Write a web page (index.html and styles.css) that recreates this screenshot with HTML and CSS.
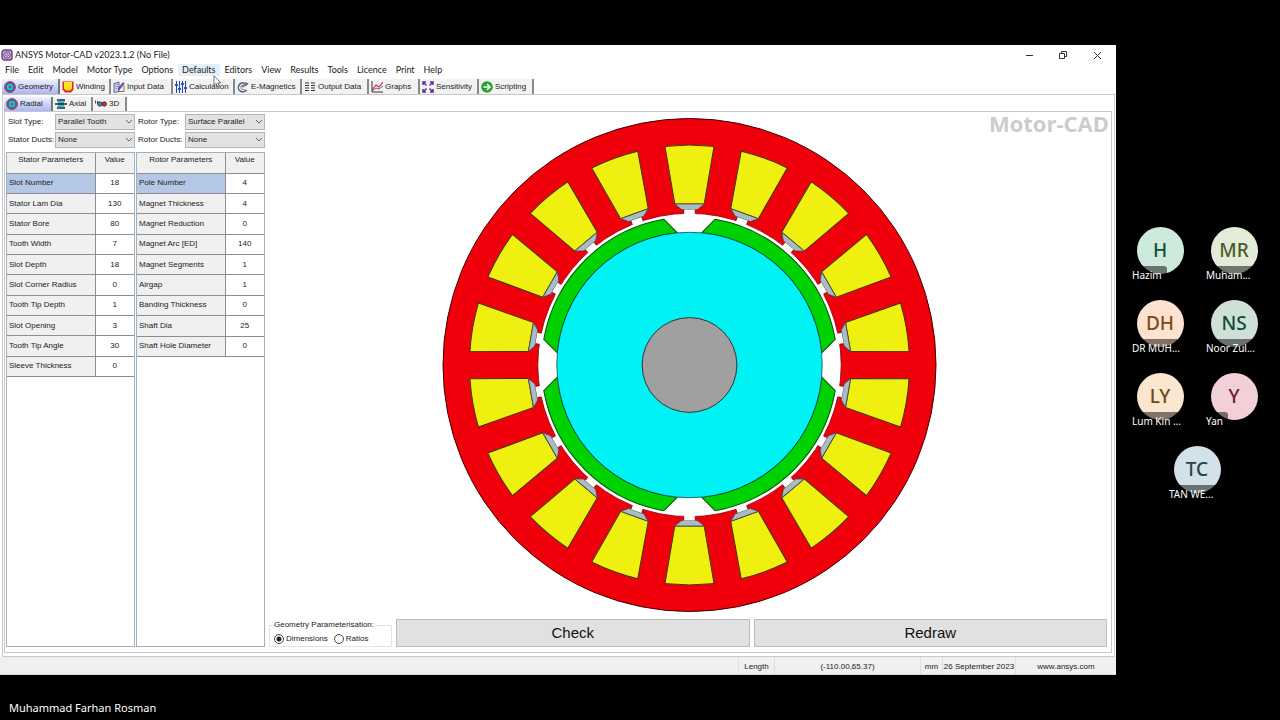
FILE: index.html
```html
<!DOCTYPE html>
<html lang="en">
<head>
<meta charset="utf-8">
<title>ANSYS Motor-CAD v2023.1.2 (No File)</title>
<link rel="stylesheet" href="styles.css">
</head>
<body>
<svg class="defs" aria-hidden="true">
  <defs>
    <symbol id="rotor" viewBox="0 0 12 12"><circle cx="6" cy="6" r="5.4" fill="#e0386a" stroke="#4a3c7e" stroke-width=".8"/><circle cx="6" cy="6" r="3.8" fill="#18d0da" stroke="#1c5578" stroke-width=".8"/><circle cx="6" cy="6" r="1.3" fill="#8a6a8e" stroke="#345" stroke-width=".4"/></symbol>
    <symbol id="chevron" viewBox="0 0 8 6"><path d="M1 1l3 3 3-3" fill="none" stroke="#666" stroke-width="1"/></symbol>
    <g id="slot">
      <path d="M-24.500-218.600A220 220 0 0 1 24.500-218.600L14.700-161H-14.700Z" fill="#f0f010" stroke="#3a3a10" stroke-width="1"/>
      <path d="M-14.700-161H14.700L8-155.500H-8Z" fill="#a9bcc4" stroke="#3e4a50" stroke-width=".8"/>
      <path d="M-5.700-155.500H5.700V-149H-5.700Z" fill="#fff"/>
      <path d="M-5.700-155V-151.500M5.700-155V-151.500" stroke="#700" stroke-width=".8"/>
    </g>
    <path id="magnet" d="M-84.900-121.200A148 148 0 0 1 84.900-121.200V-102A132.700 132.700 0 0 0-84.900-102Z" fill="#00d200" stroke="#0a4a0a" stroke-width="1"/>
  </defs>
</svg>
<div class="stage">
  <main class="window">
    <header class="titlebar">
      <svg class="app-icon" viewBox="0 0 12 12"><rect x="1" y="1" width="10" height="10" rx="2.5" fill="#d4a8cf" stroke="#5c4490" stroke-width="1.4"/><circle cx="6" cy="6" r="3.2" fill="#f4d4e4" stroke="#58439a" stroke-width="1"/><circle cx="6" cy="6" r="1.4" fill="none" stroke="#70428a" stroke-width=".8"/></svg>
      <h1>ANSYS Motor-CAD v2023.1.2 (No File)</h1>
      <div class="win-controls">
        <button aria-label="Minimise"><svg viewBox="0 0 10 10"><path d="M2 5.500h7" stroke="#333"/></svg></button>
        <button aria-label="Restore"><svg viewBox="0 0 10 10"><path d="M1.500 3.500h5v5h-5zM3.500 3.500v-2h5v5h-2" fill="none" stroke="#333"/></svg></button>
        <button aria-label="Close"><svg viewBox="0 0 10 10"><path d="M2 2l7 7M9 2l-7 7" stroke="#333"/></svg></button>
      </div>
    </header>
    <nav class="menu">
      <button>File</button><button>Edit</button><button>Model</button><button>Motor Type</button><button>Options</button><button class="hover">Defaults<svg class="cursor" viewBox="0 0 9 13"><path d="M1 .8v9.600l2.200-2 1.500 3.600 1.600-.7L4.800 7.800h3z" fill="#fff" stroke="#555" stroke-width=".8"/></svg></button><button>Editors</button><button>View</button><button>Results</button><button>Tools</button><button>Licence</button><button>Print</button><button>Help</button>
    </nav>
    <nav class="tabs main-tabs">
      <button class="active"><svg viewBox="0 0 12 12"><use href="#rotor"/></svg>Geometry</button>
      <button class="t-winding"><svg viewBox="0 0 12 12"><path d="M.5.5h11v8L9 11.500H3L.5 8.500z" fill="#e8202c"/><path d="M2 1h8v6.500L8 9.500H4L2 7.500z" fill="#ffe21a"/></svg>Winding</button>
      <button class="t-input"><svg viewBox="0 0 12 12"><path d="M1 2.500L6 1v9.500l-5 1z" fill="#d8d4f0" stroke="#4a4290" stroke-width=".8"/><path d="M6 10.500h5v-6" fill="none" stroke="#555" stroke-width=".8"/><path d="M2 4l3-1M2 6l3-1M2 8l2-.7" stroke="#6e8e50" stroke-width=".7"/><path d="M5 9l.5-2L10 1.500l1.300 1L7 8z" fill="#7655b8" stroke="#3e2870" stroke-width=".5"/></svg>Input Data</button>
      <button class="t-calc"><svg viewBox="0 0 12 12"><path d="M1.500 0v12M4.500 0v12M7.500 0v12M10.500 0v12" stroke="#2340b0"/><path d="M0 4h3M3 8h3M6 3h3M9 7h3" stroke="#2c50e0" stroke-width="2"/></svg>Calculation</button>
      <button class="t-emag"><svg viewBox="0 0 12 12"><path d="M9.500 9A4.500 4.500 0 1 1 8 2.400" fill="none" stroke="#315f86" stroke-width="1.400"/><path d="M8 8A2.500 2.500 0 1 1 8 4.500" fill="none" stroke="#6c8ca4"/><path d="M5 6l5-3" stroke="#d04d28" stroke-width="1.500"/><path d="M8 1l3.500 1.500L9 5z" fill="#3d648f"/></svg>E-Magnetics</button>
      <button class="t-output"><svg viewBox="0 0 12 12"><path d="M1 2h4M1 4.500h4M1 7h4M1 9.500h4M7 2h4M7 4.500h4M7 7h4M7 9.500h4" stroke="#333" stroke-width="1.200"/></svg>Output Data</button>
      <button class="t-graphs"><svg viewBox="0 0 12 12"><path d="M1 0v11h11" fill="none" stroke="#333"/><path d="M1 9l4-5 3 2 4-5" fill="none" stroke="#dd2638" stroke-width="1.200"/><path d="M1 10l4-3 3 1 4-3" fill="none" stroke="#5363a8"/></svg>Graphs</button>
      <button class="t-sens"><svg viewBox="0 0 12 12"><path d="M1 4V1h3M8 1h3v3M11 8v3H8M4 11H1V8M1 1l3.500 3.500M11 1L7.500 4.500M11 11L7.500 7.500M1 11l3.500-3.500" fill="none" stroke="#5b2ea6" stroke-width="1.500"/></svg>Sensitivity</button>
      <button class="t-script"><svg viewBox="0 0 12 12"><circle cx="6" cy="6" r="5.800" fill="#1fa32b"/><path d="M2.500 6h6M6 3l3 3-3 3" fill="none" stroke="#fff" stroke-width="1.700"/></svg>Scripting</button>
    </nav>
    <section class="outer-page">
      <nav class="tabs sub-tabs">
        <button class="active"><svg viewBox="0 0 12 12"><use href="#rotor"/></svg>Radial</button>
        <button class="t-axial"><svg viewBox="0 0 12 12"><path d="M2 1h8v2.500H2zM2 8.500h8V11H2z" fill="#355fa0"/><path d="M3 3.500h6v5H3z" fill="#37b9a7"/><path d="M0 6h12" stroke="#222" stroke-width="1.500"/></svg>Axial</button>
        <button class="t-3d"><svg viewBox="0 0 12 12"><path d="M.5 2.500v3M2.500 3v3" stroke="#a22"/><circle cx="4.800" cy="6" r="2.200" fill="#20a2a0" stroke="#333" stroke-width=".9"/><circle cx="9.300" cy="6" r="2.200" fill="#d82c30" stroke="#333" stroke-width=".9"/></svg>3D</button>
      </nav>
      <div class="page">
        <aside class="params">
          <form class="types">
            <label for="slot-type">Slot Type:</label>
            <span class="select"><select id="slot-type"><option>Parallel Tooth</option></select><svg><use href="#chevron"/></svg></span>
            <label for="rotor-type">Rotor Type:</label>
            <span class="select"><select id="rotor-type"><option>Surface Parallel</option></select><svg><use href="#chevron"/></svg></span>
            <label for="stator-ducts">Stator Ducts:</label>
            <span class="select"><select id="stator-ducts"><option>None</option></select><svg><use href="#chevron"/></svg></span>
            <label for="rotor-ducts">Rotor Ducts:</label>
            <span class="select"><select id="rotor-ducts"><option>None</option></select><svg><use href="#chevron"/></svg></span>
          </form>
          <div class="grids">
            <div class="grid-box">
              <table>
                <thead><tr><th>Stator Parameters</th><th>Value</th></tr></thead>
                <tbody>
                  <tr class="selected"><td>Slot Number</td><td>18</td></tr>
                  <tr><td>Stator Lam Dia</td><td>130</td></tr>
                  <tr><td>Stator Bore</td><td>80</td></tr>
                  <tr><td>Tooth Width</td><td>7</td></tr>
                  <tr><td>Slot Depth</td><td>18</td></tr>
                  <tr><td>Slot Corner Radius</td><td>0</td></tr>
                  <tr><td>Tooth Tip Depth</td><td>1</td></tr>
                  <tr><td>Slot Opening</td><td>3</td></tr>
                  <tr><td>Tooth Tip Angle</td><td>30</td></tr>
                  <tr><td>Sleeve Thickness</td><td>0</td></tr>
                </tbody>
              </table>
            </div>
            <div class="grid-box">
              <table class="rotor">
                <thead><tr><th>Rotor Parameters</th><th>Value</th></tr></thead>
                <tbody>
                  <tr class="selected"><td>Pole Number</td><td>4</td></tr>
                  <tr><td>Magnet Thickness</td><td>4</td></tr>
                  <tr><td>Magnet Reduction</td><td>0</td></tr>
                  <tr><td>Magnet Arc [ED]</td><td>140</td></tr>
                  <tr><td>Magnet Segments</td><td>1</td></tr>
                  <tr><td>Airgap</td><td>1</td></tr>
                  <tr><td>Banding Thickness</td><td>0</td></tr>
                  <tr><td>Shaft Dia</td><td>25</td></tr>
                  <tr><td>Shaft Hole Diameter</td><td>0</td></tr>
                </tbody>
              </table>
            </div>
          </div>
        </aside>
        <section class="viewer">
          <div class="canvas">
            <span class="brand">Motor-CAD</span>
            <svg class="motor" viewBox="-253 -253 507 507" role="img" aria-label="Radial cross-section">
              <circle r="246.500" fill="#f0000a" stroke="#400" stroke-width="1"/>
              <circle r="151.700" fill="#fff" stroke="#800" stroke-width=".8"/>
              <use href="#slot"/><use href="#slot" transform="rotate(20)"/><use href="#slot" transform="rotate(40)"/><use href="#slot" transform="rotate(60)"/><use href="#slot" transform="rotate(80)"/><use href="#slot" transform="rotate(100)"/><use href="#slot" transform="rotate(120)"/><use href="#slot" transform="rotate(140)"/><use href="#slot" transform="rotate(160)"/><use href="#slot" transform="rotate(180)"/><use href="#slot" transform="rotate(200)"/><use href="#slot" transform="rotate(220)"/><use href="#slot" transform="rotate(240)"/><use href="#slot" transform="rotate(260)"/><use href="#slot" transform="rotate(280)"/><use href="#slot" transform="rotate(300)"/><use href="#slot" transform="rotate(320)"/><use href="#slot" transform="rotate(340)"/>
              <use href="#magnet" transform="rotate(45)"/><use href="#magnet" transform="rotate(135)"/><use href="#magnet" transform="rotate(225)"/><use href="#magnet" transform="rotate(315)"/>
              <circle r="132.700" fill="#00f2f4" stroke="#064a50" stroke-width=".8"/>
              <circle r="47.400" fill="#a0a0a0" stroke="#333" stroke-width="1"/>
            </svg>
          </div>
          <div class="actions">
            <fieldset>
              <legend>Geometry Parameterisation:</legend>
              <label><input type="radio" name="geo" checked>Dimensions</label>
              <label><input type="radio" name="geo">Ratios</label>
            </fieldset>
            <button>Check</button>
            <button>Redraw</button>
          </div>
        </section>
      </div>
    </section>
    <footer class="status">
      <span class="s-length">Length</span><span class="s-pos">(-110.00,65.37)</span><span class="s-unit">mm</span><span class="s-date">26 September 2023</span><span class="s-site">www.ansys.com</span>
    </footer>
  </main>
  <aside class="people">
    <div class="person"><span class="avatar a-mint">H</span><span class="name">Hazim</span></div>
    <div class="person"><span class="avatar a-olive">MR</span><span class="name">Muham...</span></div>
    <div class="person"><span class="avatar a-peach">DH</span><span class="name">DR MUH...</span></div>
    <div class="person"><span class="avatar a-sage">NS</span><span class="name">Noor Zul...</span></div>
    <div class="person"><span class="avatar a-sand">LY</span><span class="name">Lum Kin ...</span></div>
    <div class="person"><span class="avatar a-pink">Y</span><span class="name">Yan</span></div>
    <div class="person"><span class="avatar a-ice">TC</span><span class="name">TAN WE...</span></div>
  </aside>
</div>
<div class="presenter">Muhammad Farhan Rosman</div>
</body>
</html>
```
FILE: styles.css
```css
* { box-sizing: border-box; }
body {
  margin: 0;
  height: 100vh;
  min-height: 560px;
  display: flex;
  flex-direction: column;
  padding-top: 45px;
  background: #000;
  color: #222;
  font: 8px/12px "Liberation Sans", sans-serif;
}
button, select, input { font: inherit; color: inherit; margin: 0; }
button { border: 0; padding: 0; background: none; }
.defs { position: absolute; width: 0; height: 0; }
.stage { flex: 1; min-height: 0; display: grid; grid-template-columns: 1fr 164px; grid-template-rows: minmax(0, 1fr); }

.window { display: flex; flex-direction: column; min-width: 0; min-height: 0; background: #fff; }
.titlebar { display: flex; align-items: center; height: 19px; padding-left: 1px; gap: 2px; flex: none; }
.app-icon { width: 12px; height: 12px; }
h1 { margin: 0; font: 9px/12px Lato, sans-serif; flex: 1; }
.win-controls { display: flex; padding-right: 2px; }
.win-controls button { width: 34px; height: 19px; display: grid; place-items: center; }
.win-controls svg { width: 10px; height: 10px; }

.menu { display: flex; flex: none; height: 12px; font: 9px/12px Lato, sans-serif; padding-left: 1px; margin-bottom: 1px; }
.menu button { padding: 0 5px 0 4px; white-space: nowrap; position: relative; }
.menu .hover { background: #e5eff8; }
.cursor { position: absolute; z-index: 2; left: 35px; top: 11px; width: 9px; height: 13px; }

.tabs { display: flex; align-items: stretch; flex: none; }
.tabs button { display: flex; align-items: center; gap: 2px; padding-left: 2px; white-space: nowrap; background: #f2f2f2; border-right: 2px solid #8a8a8a; }
.tabs svg { width: 12px; height: 12px; flex: none; }
.tabs .active { background: linear-gradient(#f0f2fd, #a9b5f0); border-right-color: #777; }
.main-tabs { height: 17px; padding-left: 2px; padding-top: 2px; }
.main-tabs .active { width: 58px; }
.t-winding, .t-graphs { width: 51px; }
.t-input, .t-calc { width: 62px; }
.t-emag, .t-output { width: 67px; }
.t-sens { width: 59px; }
.t-script { width: 55px; }

.outer-page { flex: 1; min-height: 0; display: flex; flex-direction: column; margin: 0 1px 0 2px; border: 1px solid #c8c8c8; padding: 2px 2px 3px 1px; }
.sub-tabs { height: 14px; }
.sub-tabs .active { width: 49px; }
.t-axial { width: 40px; }
.t-3d { width: 34px; }
.page { flex: 1; min-height: 0; display: flex; border: 1px solid #c8c8c8; padding: 2px 0 5px 1px; }

.params { width: 259px; flex: none; display: flex; flex-direction: column; gap: 4px; }
.types { display: grid; grid-template-columns: 48px 80px 50px 80px; row-gap: 2px; padding-left: 1px; align-items: center; }
.types label { padding-left: 1px; white-space: nowrap; }
.types label:nth-of-type(even) { padding-left: 3px; }
.select { position: relative; display: block; }
.select select { display: block; width: 100%; height: 16px; appearance: none; border: 1px solid #b4b4b4; border-radius: 0; background: #e2e2e2; padding: 0 2px; }
.select svg { position: absolute; right: 2px; top: 5px; width: 8px; height: 6px; pointer-events: none; }
.grids { flex: 1; display: grid; grid-template-columns: 1fr 1fr; gap: 1px; }
.grid-box { border: 1px solid #9fb0c0; }
table { width: 100%; height: 224px; border-collapse: collapse; table-layout: fixed; }
table.rotor { height: 204px; }
th, td { padding: 0; border-bottom: 1px solid #8e8e8e; font-weight: normal; text-align: center; background: #fff; white-space: nowrap; }
th { height: 20px; background: #f0f0f0; line-height: 12px; padding-bottom: 5px; }
th:first-child, td:first-child { border-right: 1px solid #8e8e8e; }
th:last-child { width: 39px; }
td:first-child { text-align: left; padding-left: 2px; background: #f0f0f0; }
.selected td:first-child { background: #b4c7e7; }

.viewer { flex: 1; min-width: 0; min-height: 0; display: flex; flex-direction: column; padding-left: 4px; }
.canvas { flex: 1; position: relative; min-height: 0; margin-top: -2px; }
.motor { display: block; width: 100%; height: 100%; }
.brand { position: absolute; right: 2px; top: 0; font: bold 22px/22px "Open Sans", sans-serif; color: #ccc; }
.actions { flex: none; display: grid; grid-template-columns: 123px 1fr 1fr; gap: 4px; height: 28px; margin-right: 4px; }
.actions button { border: 1px solid #bdbdbd; background: #e1e1e1; color: #111; font: 15px/20px "Liberation Sans", sans-serif; }
fieldset { margin: 0; padding: 0 4px; border: 1px solid #e4e4e4; display: flex; gap: 6px; align-items: center; min-width: 0; }
legend { padding: 0; line-height: 12px; white-space: nowrap; }
fieldset label { display: flex; align-items: center; gap: 2px; }
input[type="radio"] { appearance: none; width: 10px; height: 10px; border: 1px solid #444; border-radius: 50%; background: #fff; }
input[type="radio"]:checked { background: radial-gradient(circle, #222 0 2px, #fff 3px); }

.status { display: flex; flex: none; justify-content: flex-end; height: 18px; line-height: 19px; background: #f0f0f0; border-bottom: 1px solid #d8d8d8; text-align: center; }
.status span { border-left: 1px solid #dedede; white-space: nowrap; }
.s-length { width: 36px; }
.s-pos { width: 146px; }
.s-unit { width: 22px; }
.s-date { width: 73px; }
.s-site { width: 101px; }

.people { display: flex; flex-wrap: wrap; justify-content: center; align-content: center; padding: 10px 2px 0 0; font-family: "Noto Sans", sans-serif; }
.person { width: 74px; height: 73px; display: flex; flex-direction: column; align-items: center; padding-top: 8px; }
.avatar { width: 47px; height: 47px; border-radius: 50%; font-size: 19px; font-weight: 500; line-height: 47px; text-align: center; }
.name { align-self: flex-start; position: relative; margin: -8px 0 0 6px; padding: 0 5px 0 3px; border-radius: 3px; background: rgba(0, 0, 0, .5); color: #fff; font-size: 10px; line-height: 18px; white-space: nowrap; }
.a-mint { background: #cdeadd; color: #0f5132; }
.a-olive { background: #e3ecd8; color: #4d5a26; }
.a-peach { background: #fde3cf; color: #7d4a17; }
.a-sage { background: #cfe0d9; color: #0e4a30; }
.a-sand { background: #fbe6cf; color: #6b4a12; }
.a-pink { background: #f1d0d8; color: #6c1b30; }
.a-ice { background: #d3e2e9; color: #1f4650; }
.presenter { flex: none; height: 45px; padding: 25px 9px 0; color: #fff; font: 11px/16px "Noto Sans", sans-serif; }
```
